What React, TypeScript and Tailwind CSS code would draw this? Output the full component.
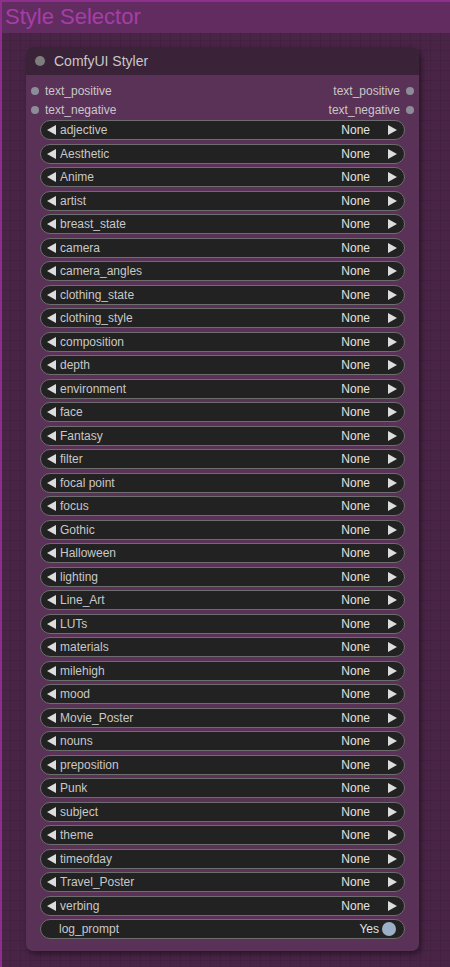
import React from "react";

const rows = [
  "adjective","Aesthetic","Anime","artist","breast_state","camera","camera_angles","clothing_state","clothing_style","composition","depth","environment","face","Fantasy","filter","focal point","focus","Gothic","Halloween","lighting","Line_Art","LUTs","materials","milehigh","mood","Movie_Poster","nouns","preposition","Punk","subject","theme","timeofday","Travel_Poster","verbing",
];

function Tri({ dir }: { dir: "l" | "r" }) {
  return (
    <svg width="9" height="10" viewBox="0 0 9 10" className="shrink-0">
      {dir === "l" ? <polygon points="9,0 9,10 0,5" fill="#dddddd" /> : <polygon points="0,0 0,10 9,5" fill="#dddddd" />}
    </svg>
  );
}

export default function App() {
  return (
    <div
      className="w-[450px] h-[967px] overflow-hidden bg-[#4a2447] relative"
      style={{ fontFamily: '"Liberation Sans", Arial, sans-serif' }}
    >
      <div className="absolute inset-0 bg-[linear-gradient(rgba(0,0,0,0.09)_1px,transparent_1px),linear-gradient(90deg,rgba(0,0,0,0.09)_1px,transparent_1px)] bg-[size:10px_10px]" />
      <div className="relative h-full border-l-2 border-t-2 border-[#8e2f8d] flex flex-col">
        <div className="h-[31px] bg-[#652e64]/90 flex items-center pl-[3px] shrink-0">
          <span className="text-[22px] leading-none text-[#a53ea6] mt-[-2px]">Style Selector</span>
        </div>
        <div className="pl-[24px] pt-[14px]">
          <div className="w-[393px] rounded-[7px] bg-[#5a3157] shadow-[2px_3px_6px_rgba(0,0,0,0.45)] overflow-hidden">
            <div className="h-[28px] bg-[#3a2238] flex items-center pl-[9px] gap-[9px]">
              <div className="w-[10px] h-[10px] rounded-full bg-[#7d7d7d]" />
              <span className="text-[14px] text-[#c8c8c8]">ComfyUI Styler</span>
            </div>
            <div className="pt-[6px] pb-[12px]">
              <div className="flex items-center justify-between h-[19px] px-[5px] text-[12px] text-[#c8c8c8]">
                <div className="flex items-center gap-[6px]">
                  <div className="w-[8px] h-[8px] rounded-full bg-[#8d8d9a]" />
                  <span>text_positive</span>
                </div>
                <div className="flex items-center gap-[6px]">
                  <span>text_positive</span>
                  <div className="w-[8px] h-[8px] rounded-full bg-[#8d8d9a]" />
                </div>
              </div>
              <div className="flex items-center justify-between h-[19px] px-[5px] text-[12px] text-[#c8c8c8]">
                <div className="flex items-center gap-[6px]">
                  <div className="w-[8px] h-[8px] rounded-full bg-[#8d8d9a]" />
                  <span>text_negative</span>
                </div>
                <div className="flex items-center gap-[6px]">
                  <span>text_negative</span>
                  <div className="w-[8px] h-[8px] rounded-full bg-[#8d8d9a]" />
                </div>
              </div>
              <div className="flex flex-col gap-[3.5px] px-[14px] mt-[1px]">
                {rows.map((r) => (
                  <div key={r} className="h-[20px] rounded-full bg-[#222222] border border-[#6d6d6d] flex items-center pl-[6px] pr-[7px] text-[12px]">
                    <Tri dir="l" />
                    <span className="ml-[4px] text-[#c8c8c8]">{r}</span>
                    <span className="ml-auto text-[#e2e2e2] mr-[18px]">None</span>
                    <Tri dir="r" />
                  </div>
                ))}
                <div className="h-[20px] rounded-full bg-[#222222] border border-[#6d6d6d] flex items-center pl-[18px] pr-[8px] text-[12px]">
                  <span className="text-[#c8c8c8]">log_prompt</span>
                  <span className="ml-auto text-[#e2e2e2] mr-[3px]">Yes</span>
                  <div className="w-[14px] h-[14px] rounded-full bg-[#9bb0c6]" />
                </div>
              </div>
            </div>
          </div>
        </div>
      </div>
    </div>
  );
}
